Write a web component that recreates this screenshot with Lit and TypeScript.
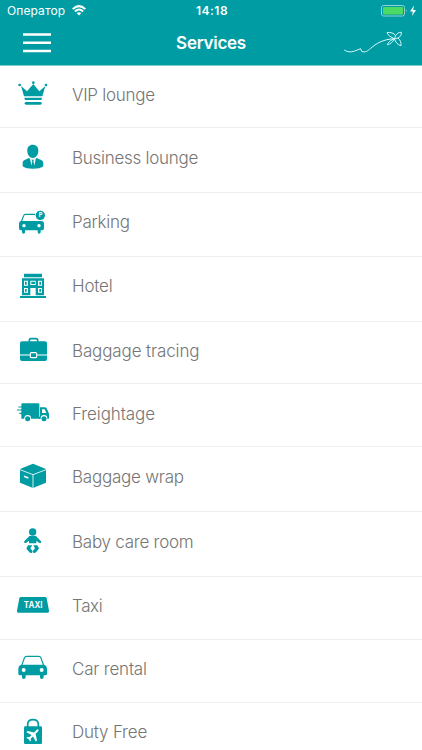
import { LitElement, html, svg, css } from "lit";
import type { SVGTemplateResult } from "lit";
import { customElement } from "lit/decorators.js";

interface Service {
  label: string;
  height: number;
  /** Top of the icon's drawing space; three units make one pixel. */
  top: number;
  /** Letter spacing of the label, px. */
  spacing: number;
  /** Space above the label, px. */
  offset: number;
  icon: SVGTemplateResult;
}

const services: Service[] = [
  {
    label: "VIP lounge", height: 62, top: 0, spacing: -0.27, offset: 19,
    icon: svg`
      <path d="M63 60 L81 76 L100 54 L118 76 L136 60 L127 91 H72Z"/>
      <circle cx="59" cy="57" r="4"/><circle cx="100" cy="50" r="4"/><circle cx="138" cy="57" r="4"/>
      <path d="M73 95 H126 L124 102 H75Z"/>
      <rect x="74" y="108" width="51" height="8" rx="4"/>`,
  },
  {
    label: "Business lounge", height: 65, top: 186, spacing: -0.27, offset: 19.5,
    icon: svg`
      <path d="M98 236 C109 236 116 243 115 255 C115 266 108 276 98 276 C89 276 82 266 82 255 C81 243 88 236 98 236Z"/>
      <path d="M86 276 C80 281 68 281 68 291 V301 C78 311 120 311 130 301 V291 C130 281 117 281 111 276 L98 283Z"/>
      <path class="cut" d="M90 278 L98 281 L107 278 L104 296 L99 303 L94 296Z"/>
      <path d="M95 281 H102 L100 286 L104 299 L99 306 L94 299 L97 286Z"/>`,
  },
  {
    label: "Parking", height: 64, top: 3, spacing: -0.27, offset: 19,
    icon: svg`
      <path class="line" d="M64 89 L71 71 Q72 67 76 67 H105"/>
      <path d="M64 87 H124 Q132 87 132 96 V109 Q132 115 127 115 H122 V121 Q122 125 117 125 Q113 125 113 121 V115 H75 V121 Q75 125 71 125 Q66 125 66 121 V115 H62 Q57 115 57 109 V96 Q57 87 64 87Z"/>
      <circle class="cut" cx="72" cy="101" r="5"/><circle class="cut" cx="117" cy="101" r="5"/>
      <circle class="cut" cx="121" cy="70" r="16"/><circle cx="121" cy="70" r="14"/>
      <text class="glyph" x="121.5" y="76" font-size="17">P</text>`,
  },
  {
    label: "Hotel", height: 65, top: 195, spacing: -0.18, offset: 19,
    icon: svg`
      <path d="M72 245 H126 V256 H72Z M66 259 H132 V310 H66Z M60 312 H138 V318 H60Z"/>
      <path class="cut" d="M72 266 H84 V281 H72Z M91 266 H107 V279 H91Z M114 266 H126 V281 H114Z M72 288 H84 V302 H72Z M114 288 H126 V302 H114Z M91 288 H107 V312 H91Z"/>
      <path d="M75 269 H80 V278 H75Z M94 269 H105 V276 H94Z M118 269 H123 V278 H118Z M75 291 H80 V299 H75Z M118 291 H123 V299 H118Z"/>`,
  },
  {
    label: "Baggage tracing", height: 62, top: 6, spacing: -0.13, offset: 19,
    icon: svg`
      <path class="line wide" d="M88 66 V61 Q88 56 93 56 H108 Q113 56 113 61 V66"/>
      <path d="M66 64 H135 Q141 64 141 70 V117 Q141 123 135 123 H66 Q60 123 60 117 V70 Q60 64 66 64Z"/>
      <path class="gap" d="M60 105 H90 M110 105 H141"/>
      <rect class="gap" x="91" y="98" width="19" height="15" rx="3"/>`,
  },
  {
    label: "Freightage", height: 63, top: 192, spacing: -0.1, offset: 20,
    icon: svg`
      <path d="M68 250 H115 Q118 250 118 253 V296 H64 V254 Q64 250 68 250Z"/>
      <path d="M120 262 H135 Q139 262 141 267 L147 281 V294 Q147 297 144 297 H117 V290 H120Z"/>
      <path class="cut" d="M126 268 H134 L139 279 H126Z"/>
      <path class="line" d="M55 261 H66 M51 270 H66 M58 280 H66"/>
      <circle class="cut" cx="83" cy="295" r="10"/><circle class="cut" cx="132" cy="295" r="10"/>
      <circle cx="83" cy="296" r="7.5"/><circle cx="132" cy="296" r="7.5"/>`,
  },
  {
    label: "Baggage wrap", height: 65, top: 3, spacing: -0.24, offset: 19.5,
    icon: svg`
      <path d="M99 53 L138 69 V110 L99 126 L60 110 V69Z"/>
      <path class="gap thin" d="M60 71 L99 86 L138 71 M99 86 V126"/>
      <path class="gap wide" d="M72 91 L85 96"/>`,
  },
  {
    label: "Baby care room", height: 65, top: 198, spacing: -0.24, offset: 20,
    icon: svg`
      <circle cx="98" cy="258" r="11"/>
      <path d="M88 270 H108 L123 286 Q125 289 122 291 Q120 292 117 290 L109 284 V292 H87 V284 L79 290 Q76 292 74 291 Q71 289 73 286Z"/>
      <path d="M84 298 H97 L91 307 L97 314 Q99 318 95 321 Q91 322 88 319 L80 309 Q79 307 80 305Z M112 298 H100 L105 307 L99 314 Q97 318 101 321 Q105 322 108 319 L116 309 Q118 307 116 305Z"/>`,
  },
  {
    label: "Taxi", height: 63, top: 3, spacing: -0.4, offset: 19,
    icon: svg`
      <path d="M63 63 H135 Q139 63 140 67 L147 104 Q148 110 143 110 H55 Q50 110 51 104 L58 67 Q59 63 63 63Z"/>
      <text class="glyph" x="99.5" y="96" font-size="25" textLength="56" lengthAdjust="spacingAndGlyphs">TAXI</text>`,
  },
  {
    label: "Car rental", height: 63, top: 192, spacing: -0.2, offset: 19,
    icon: svg`
      <path class="line" d="M65 269 L73 246 Q75 241 80 241 H116 Q121 241 123 246 L131 269"/>
      <path d="M63 266 H133 Q141 269 141 278 V293 Q141 298 136 298 H131 V304 Q131 309 125 309 Q120 309 120 304 V298 H77 V304 Q77 309 71 309 Q66 309 66 304 V298 H60 Q55 298 55 293 V278 Q55 269 63 266Z"/>
      <circle class="cut" cx="71" cy="282" r="6"/><circle class="cut" cx="125" cy="282" r="6"/>`,
  },
  {
    label: "Duty Free", height: 63, top: 381, spacing: -0.2, offset: 19,
    icon: svg`
      <path class="line wide" d="M83 454 V446 Q83 431 99 431 Q115 431 115 446 V454"/>
      <rect x="72" y="451" width="54" height="53" rx="4"/>
      <path class="cut" transform="translate(99 477) rotate(45)" d="M0 -23 Q3 -23 3 -17 V-8 L20 3 V8 L3 3 V13 L8 17 V20 L0 18 L-8 20 V17 L-3 13 V3 L-20 8 V3 L-3 -8 V-17 Q-3 -23 0 -23Z"/>`,
  },
];

@customElement("service-row")
class ServiceRow extends LitElement {
  static properties = { service: { attribute: false } };
  declare service: Service;

  static styles = css`
    :host { display: block; flex: none; }
    .row { display: flex; align-items: flex-start; box-sizing: border-box; border-bottom: 1px solid #eeeef0; }
    svg { flex: none; display: block; fill: #009ca3; }
    .label { padding-left: 12px; font-size: 17px; line-height: 20px; font-weight: 300; color: #757575; white-space: nowrap; }
    .cut { fill: #fff; }
    .line { fill: none; stroke: #009ca3; stroke-width: 3.5; }
    .gap { fill: none; stroke: #fff; stroke-width: 3.5; }
    .line.wide, .gap.wide { stroke-width: 5; }
    .gap.thin { stroke-width: 2.5; }
    .glyph { fill: #fff; font-family: Inter, sans-serif; font-weight: 700; text-anchor: middle; }
  `;

  render() {
    const { label, height, top, spacing, offset, icon } = this.service;
    return html`<div class="row" style="height:${height}px">
      <svg width="60" height=${height - 1} viewBox="0 ${top} 180 ${(height - 1) * 3}">${icon}</svg>
      <span class="label" style="letter-spacing:${spacing}px;padding-top:${offset}px">${label}</span>
    </div>`;
  }
}

@customElement("app-root")
class AppRoot extends LitElement {
  static styles = css`
    :host { display: flex; flex-direction: column; height: 750px; overflow: hidden; background: #fff; font-family: Inter, "Liberation Sans", sans-serif; }
    header { flex: none; box-sizing: border-box; height: 66px; background: #009ca3; color: #fff; border-bottom: 1px solid #7fcfd2; }
    .status, .nav { display: grid; grid-template-columns: 1fr auto 1fr; align-items: center; }
    .status { height: 21px; padding: 0 5px 0 7px; font-size: 12px; line-height: 15px; }
    .carrier { display: flex; align-items: center; gap: 7px; letter-spacing: 0.1px; }
    .time { font-weight: 600; letter-spacing: 0.5px; }
    .battery { justify-self: end; }
    .nav { height: 43px; padding: 0 19px; }
    .menu { margin-left: 4px; }
    .title { margin: 0; font-size: 17px; line-height: 20px; font-weight: 600; letter-spacing: -0.25px; }
    .logo { justify-self: end; }
    svg { display: block; }
    main { display: flex; flex-direction: column; min-height: 0; overflow: hidden; }
  `;

  render() {
    return html`
      <header>
        <div class="status">
          <div class="carrier">
            <span>Оператор</span>
            <svg width="14" height="11" viewBox="0 0 14 11" fill="none" stroke="#fff" stroke-width="2">
              <path d="M0.7 4.1 Q7 -1.9 13.3 4.1 M2.9 6.4 Q7 2.6 11.1 6.4"/>
              <path d="M4.7 8.1 Q7 6.3 9.3 8.1 L7 10.6Z" fill="#fff" stroke="none"/>
            </svg>
          </div>
          <span class="time">14:18</span>
          <svg class="battery" width="36" height="12" viewBox="0 0 36 12">
            <rect x="0.5" y="0.5" width="23" height="10.5" rx="2" fill="none" stroke="#8fd3d5"/>
            <rect x="2" y="2" width="20" height="7.5" rx="1" fill="#4cd964"/>
            <path d="M25 4 Q26.5 5.7 25 7.5Z" fill="#8fd3d5"/>
            <path d="M33 0.5 L29 6.5 H31.8 L31 11 L35 5 H32.2Z" fill="#fff"/>
          </svg>
        </div>
        <div class="nav">
          <svg class="menu" width="28" height="20" viewBox="0 0 28 20" stroke="#fff" stroke-width="2.6">
            <path d="M0 1.5 H28 M0 9.8 H28 M0 18 H28"/>
          </svg>
          <h1 class="title">Services</h1>
          <svg class="logo" width="59" height="24" viewBox="399 94 177 72" fill="none" stroke="#d9fbfc" stroke-width="3" stroke-linejoin="round">
            <path d="M400 151 C408 157 419 158 428 155 C438 152 443 149 449 147 L452 155 C463 160 471 153 479 146 C495 132 515 119 550 117"/>
            <path d="M550 117 C541 113 531 108 528 99 C538 97 549 100 554 108 C558 102 563 97 571 98 C572 106 568 111 561 115 C568 121 571 129 570 138 C560 136 554 128 550 117 M553 108 C552 121 541 133 529 135 C531 127 541 119 561 115"/>
          </svg>
        </div>
      </header>
      <main>${services.map((s) => html`<service-row .service=${s}></service-row>`)}</main>
    `;
  }
}
